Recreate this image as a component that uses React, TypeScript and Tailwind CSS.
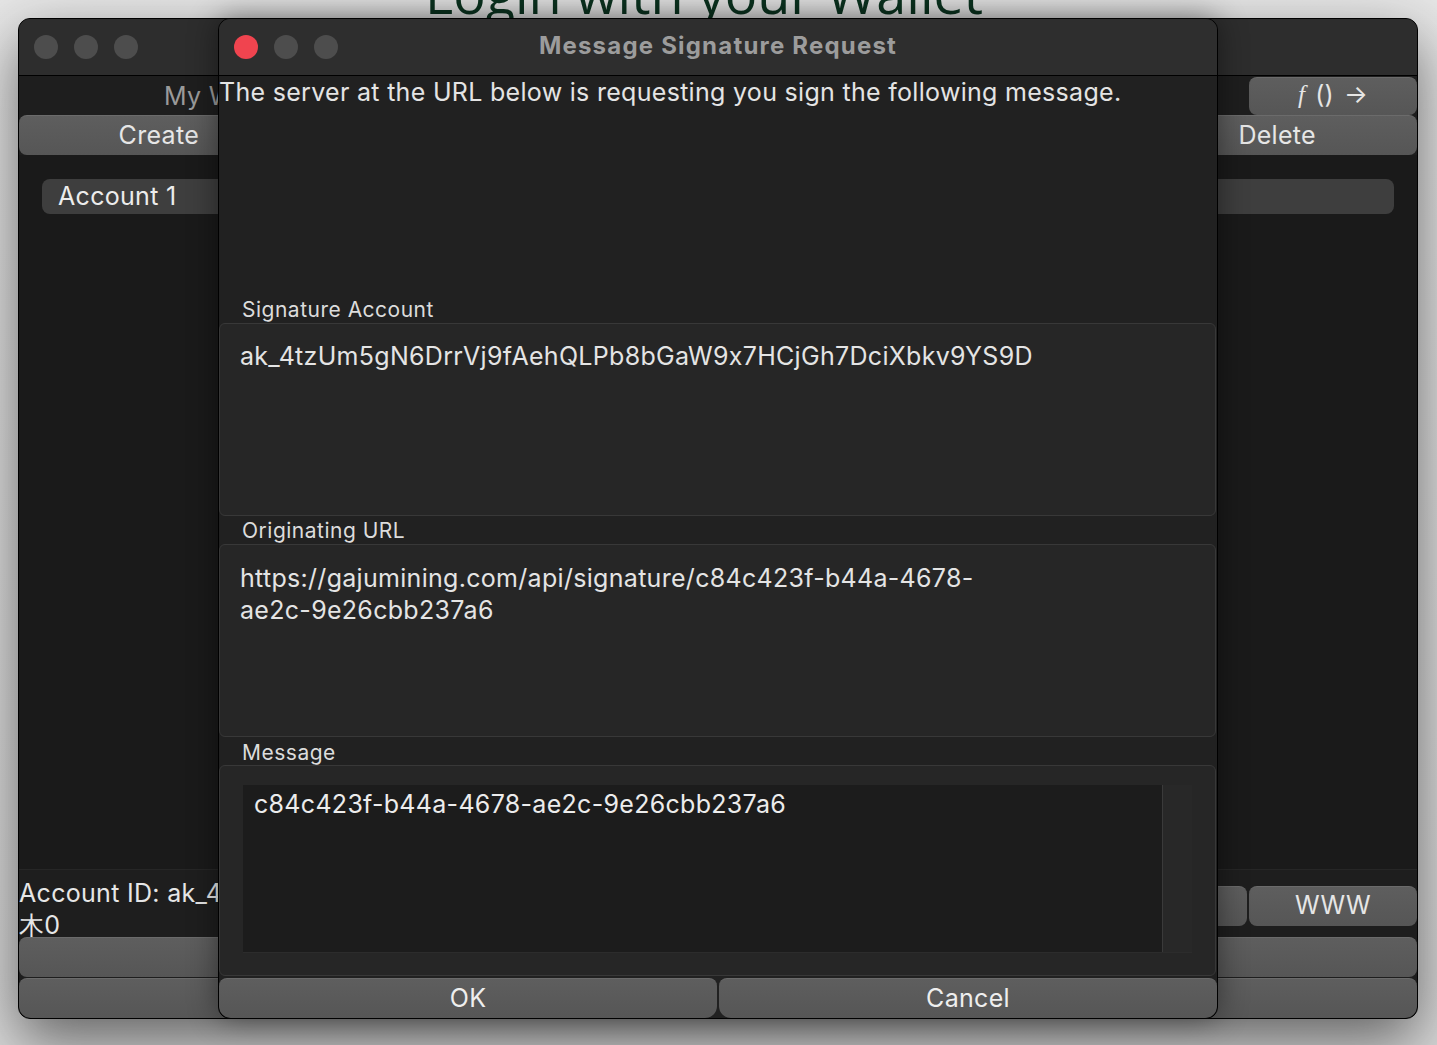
import React from "react";

const BODY = "text-[25px] tracking-[0.3px] [font-feature-settings:'calt'_0]";

function Dot({ red }: { red?: boolean }) {
  return (
    <div
      className={
        red
          ? "w-[24px] h-[24px] rounded-full bg-[#f0444f]"
          : "w-[24px] h-[24px] rounded-full bg-[#4d4d4d]"
      }
    />
  );
}

function GrayButton({ children, className }: { children?: React.ReactNode; className?: string }) {
  return (
    <div
      className={
        "flex items-center justify-center rounded-[8px] bg-gradient-to-b from-[#5e5e5e] to-[#565656] border-t border-[#6b6b6b] text-[25px] tracking-[0.3px] text-[#e6e6e6] " +
        (className ?? "")
      }
    >
      {children}
    </div>
  );
}

export default function App() {
  return (
    <div className="relative w-[1437px] h-[1045px] overflow-hidden bg-gradient-to-b from-[#e6e6e6] to-[#d9d9d9] font-['Inter',sans-serif] [font-feature-settings:'calt'_0]">
      {/* background page heading */}
      <div className="absolute left-[425px] top-[-34px] text-[54px] leading-none text-[#0b3420] font-['Open_Sans',sans-serif] whitespace-nowrap">
        Login with your Wallet
      </div>

      {/* main window */}
      <div className="absolute left-[18px] top-[18px] w-[1400px] h-[1001px] rounded-[12px] border border-black bg-[#1e1e1e] shadow-[0_22px_60px_rgba(0,0,0,0.55)] flex flex-col overflow-hidden">
        <div className="h-[57px] shrink-0 bg-[#2d2d2d] border-b border-black flex items-center gap-[16px] pl-[15px]">
          <Dot />
          <Dot />
          <Dot />
        </div>
        <div className="h-[39px] shrink-0 flex items-end">
          <div className={"w-[199px] h-[39px] pl-[145px] pt-[2px] flex items-center whitespace-nowrap overflow-hidden text-[#9a9a9a] " + BODY}>My Wallet</div>
          <div className="flex-1" />
          <GrayButton className="w-[168px] h-[38px] gap-[10px] pb-[3px]">
            <span className="font-['Liberation_Serif',serif] italic">f</span>
            <span>()</span>
            <span>→</span>
          </GrayButton>
        </div>
        <div className="h-[40px] shrink-0 flex">
          <GrayButton className="flex-1">Create</GrayButton>
          <GrayButton className="flex-1">Import</GrayButton>
          <GrayButton className="flex-1">Export</GrayButton>
          <GrayButton className="flex-1">Rename</GrayButton>
          <GrayButton className="flex-1">Delete</GrayButton>
        </div>
        <div className="flex-1 bg-[#1a1a1a] border-b border-[#262626] px-[23px] pt-[24px]">
          <div className={"h-[35px] rounded-[8px] bg-[#3e3e3e] pl-[16px] flex items-center text-[#ececec] " + BODY}>
            Account 1
          </div>
        </div>
        <div className="h-[67px] shrink-0 flex items-center">
          <div className={"flex-1 pt-[10px] leading-[32px] text-[#e6e6e6] whitespace-nowrap overflow-hidden " + BODY}>
            <div className="w-[199px] overflow-hidden">Account ID: ak_4tzUm5gN6DrrVj9fAehQLPb8bGaW9x7HCjGh7DciXbkv9YS9D</div>
            <div>木0</div>
          </div>
          <div className="flex gap-[2px] pt-[4px]">
            <GrayButton className="w-[168px] h-[40px]">Copy</GrayButton>
            <GrayButton className="w-[168px] h-[40px]">WWW</GrayButton>
          </div>
        </div>
        <div className="flex flex-col gap-[1px] shrink-0">
          <GrayButton className="h-[40px]" />
          <GrayButton className="h-[40px] rounded-b-[12px]" />
        </div>
      </div>

      {/* modal */}
      <div className="absolute left-[218px] top-[18px] w-[1000px] h-[1001px] rounded-[12px] border border-black bg-[#212121] shadow-[0_0_30px_rgba(0,0,0,0.45)] flex flex-col overflow-hidden">
        <div className="h-[57px] shrink-0 bg-[#2e2e2e] border-b border-black flex items-center">
          <div className="w-[119px] flex items-center gap-[16px] pl-[15px]">
            <Dot red />
            <Dot />
            <Dot />
          </div>
          <div className="flex-1 text-center text-[24px] tracking-[1.2px] font-bold text-[#9c9c9c] pb-[2px]">Message Signature Request</div>
          <div className="w-[119px]" />
        </div>
        <div className={"h-[219px] shrink-0 leading-[32px] text-[#e4e4e4] " + BODY}>
          The server at the URL below is requesting you sign the following message.
        </div>

        <div className="h-[28px] shrink-0 pl-[23px] pt-[2px] flex items-center text-[21px] tracking-[0.5px] text-[#dcdcdc]">Signature Account</div>
        <div className={"h-[193px] shrink-0 mr-[1px] rounded-[6px] border border-[#383838] bg-[#262626] px-[20px] pt-[16px] leading-[32px] text-[#e4e4e4] " + BODY}>
          ak_4tzUm5gN6DrrVj9fAehQLPb8bGaW9x7HCjGh7DciXbkv9YS9D
        </div>

        <div className="h-[28px] shrink-0 pl-[23px] pt-[2px] flex items-center text-[21px] tracking-[0.5px] text-[#dcdcdc]">Originating URL</div>
        <div className={"h-[193px] shrink-0 mr-[1px] rounded-[6px] border border-[#383838] bg-[#262626] px-[20px] pt-[17px] leading-[32px] text-[#e4e4e4] " + BODY}>
          <div>https://gajumining.com/api/signature/c84c423f-b44a-4678-</div>
          <div>ae2c-9e26cbb237a6</div>
        </div>

        <div className="h-[28px] shrink-0 pl-[23px] pt-[3px] flex items-center text-[21px] tracking-[0.5px] text-[#dcdcdc]">Message</div>
        <div className="h-[211px] shrink-0 mr-[1px] rounded-[6px] border border-[#383838] bg-[#262626] pl-[23px] pr-[23px] pt-[19px] pb-[22px] flex">
          <div className="flex-1 flex bg-[#1c1c1c] border-b border-[#2c2c2c]">
            <div className={"flex-1 pl-[11px] pt-[3px] leading-[32px] text-[#ececec] " + BODY}>
              c84c423f-b44a-4678-ae2c-9e26cbb237a6
            </div>
            <div className="w-[30px] bg-[#282828] border-l border-[#3a3a3a]" />
          </div>
        </div>

        <div className="mt-[2px] h-[40px] shrink-0 flex gap-[2px]">
          <GrayButton className="flex-1 rounded-b-[12px] text-[#eeeeee]">OK</GrayButton>
          <GrayButton className="flex-1 rounded-b-[12px] text-[#eeeeee]">Cancel</GrayButton>
        </div>
      </div>
    </div>
  );
}
